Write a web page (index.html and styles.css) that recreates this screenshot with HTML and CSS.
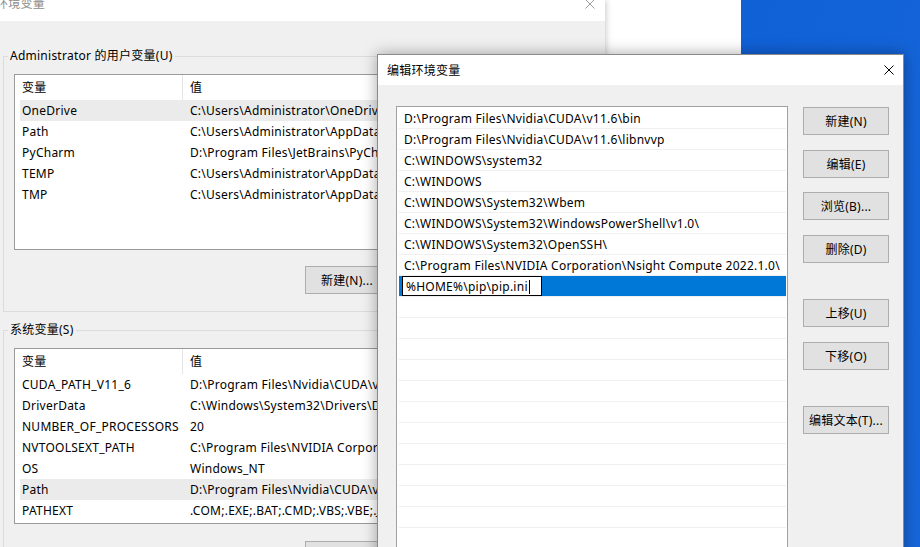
FILE: index.html
```html
<!DOCTYPE html>
<html lang="zh-CN">
<head>
<meta charset="utf-8">
<title>编辑环境变量</title>
<link rel="stylesheet" href="styles.css">
</head>
<body>
  <div class="desk-window"></div>

  <div class="win back">
    <div class="back-title">
      <span class="title">环境变量</span>
      <svg class="close" width="10" height="10" viewBox="0 0 10 10"><path d="M0.5 0.5 L9.5 9.5 M9.5 0.5 L0.5 9.5" stroke="#9a9a9a" stroke-width="1" fill="none"/></svg>
    </div>
    <div class="back-body">
      <fieldset class="group user">
        <legend>Administrator 的用户变量(U)</legend>
        <div class="lv">
          <div class="lv-head"><div class="c1">变量</div><div class="c2">值</div></div>
          <div class="lv-row sel"><div class="c1">OneDrive</div><div class="c2">C:\Users\Administrator\OneDrive</div></div>
          <div class="lv-row"><div class="c1">Path</div><div class="c2">C:\Users\Administrator\AppData\Local\Microsoft\WindowsApps;</div></div>
          <div class="lv-row"><div class="c1">PyCharm</div><div class="c2">D:\Program Files\JetBrains\PyCharm 2021.3\bin;</div></div>
          <div class="lv-row"><div class="c1">TEMP</div><div class="c2">C:\Users\Administrator\AppData\Local\Temp</div></div>
          <div class="lv-row"><div class="c1">TMP</div><div class="c2">C:\Users\Administrator\AppData\Local\Temp</div></div>
        </div>
        <div class="btnrow">
          <button class="btn">新建(N)...</button>
          <button class="btn">编辑(E)...</button>
          <button class="btn">删除(D)</button>
        </div>
      </fieldset>

      <fieldset class="group sys">
        <legend>系统变量(S)</legend>
        <div class="lv">
          <div class="lv-head"><div class="c1">变量</div><div class="c2">值</div></div>
          <div class="lv-row"><div class="c1">CUDA_PATH_V11_6</div><div class="c2">D:\Program Files\Nvidia\CUDA\v11.6</div></div>
          <div class="lv-row"><div class="c1">DriverData</div><div class="c2">C:\Windows\System32\Drivers\DriverData</div></div>
          <div class="lv-row"><div class="c1">NUMBER_OF_PROCESSORS</div><div class="c2">20</div></div>
          <div class="lv-row"><div class="c1">NVTOOLSEXT_PATH</div><div class="c2">C:\Program Files\NVIDIA Corporation\NvToolsExt\</div></div>
          <div class="lv-row"><div class="c1">OS</div><div class="c2">Windows_NT</div></div>
          <div class="lv-row sel"><div class="c1">Path</div><div class="c2">D:\Program Files\Nvidia\CUDA\v11.6\bin;D:\Program Files\Nvidia\CUDA\v11.6\libnvvp;</div></div>
          <div class="lv-row"><div class="c1">PATHEXT</div><div class="c2">.COM;.EXE;.BAT;.CMD;.VBS;.VBE;.JS;.JSE;.WSF;.WSH;.MSC</div></div>
        </div>
        <div class="btnrow">
          <button class="btn">新建(W)...</button>
          <button class="btn">编辑(I)...</button>
          <button class="btn">删除(L)</button>
        </div>
      </fieldset>
    </div>
  </div>

  <div class="win front">
    <div class="front-title">
      <span class="title">编辑环境变量</span>
      <svg class="close" width="10" height="10" viewBox="0 0 10 10"><path d="M0.5 0.5 L9.5 9.5 M9.5 0.5 L0.5 9.5" stroke="#000" stroke-width="1" fill="none"/></svg>
    </div>
    <div class="front-body">
      <div class="pathlist">
        <div class="prow">D:\Program Files\Nvidia\CUDA\v11.6\bin</div>
        <div class="prow">D:\Program Files\Nvidia\CUDA\v11.6\libnvvp</div>
        <div class="prow">C:\WINDOWS\system32</div>
        <div class="prow">C:\WINDOWS</div>
        <div class="prow">C:\WINDOWS\System32\Wbem</div>
        <div class="prow">C:\WINDOWS\System32\WindowsPowerShell\v1.0\</div>
        <div class="prow">C:\WINDOWS\System32\OpenSSH\</div>
        <div class="prow">C:\Program Files\NVIDIA Corporation\Nsight Compute 2022.1.0\</div>
        <div class="prow editing"><div class="editbox"><span>%HOME%\pip\pip.ini</span><span class="caret"></span></div></div>
        <div class="prow"></div>
        <div class="prow"></div>
        <div class="prow"></div>
        <div class="prow"></div>
        <div class="prow"></div>
        <div class="prow"></div>
        <div class="prow"></div>
        <div class="prow"></div>
        <div class="prow"></div>
        <div class="prow"></div>
        <div class="prow"></div>
        <div class="prow"></div>
        <div class="prow"></div>
      </div>
      <div class="btncol">
        <button class="btn">新建(N)</button>
        <button class="btn">编辑(E)</button>
        <button class="btn">浏览(B)...</button>
        <button class="btn">删除(D)</button>
        <button class="btn spaced">上移(U)</button>
        <button class="btn">下移(O)</button>
        <button class="btn spaced">编辑文本(T)...</button>
      </div>
    </div>
  </div>
</body>
</html>
```
FILE: styles.css
```css
* { box-sizing: border-box; }
html, body { margin: 0; padding: 0; }
body {
  width: 920px;
  height: 547px;
  overflow: hidden;
  position: relative;
  background: linear-gradient(100deg, #0a56cc 0%, #0d5dd4 60%, #1666da 100%);
  font-family: "Noto Sans", "Noto Sans CJK SC", sans-serif;
  font-size: 12px;
  letter-spacing: 0.25px;
  color: #000;
}

.desk-window {
  position: absolute;
  left: 420px;
  top: 0;
  width: 321px;
  height: 547px;
  background: #fff;
}

.win { position: absolute; }

/* back window */
.back {
  left: 0;
  top: 0;
  width: 605px;
  height: 547px;
  background: #f0f0f0;
  box-shadow: 1px 0 6px rgba(0, 0, 0, 0.22);
}
.back-title {
  height: 21px;
  background: #fff;
  display: flex;
  justify-content: space-between;
  align-items: flex-start;
  padding-right: 10px;
}
.back-title .title {
  color: #8c8c8c;
  margin-left: -4px;
  margin-top: -3px;
  line-height: 14px;
}
.back-title .close { margin-top: -1px; }

.back-body { padding: 27px 11px 0 3px; }

fieldset.group {
  margin: 0;
  padding: 10px 10px 17px 10px;
  border: 1px solid #dcdcdc;
  min-width: 0;
}
fieldset.group legend {
  padding: 0 2px;
  margin-left: -6px;
  line-height: 16px;
}
fieldset.sys { margin-top: 10px; }

.lv {
  height: 176px;
  background: #fff;
  border: 1px solid #9a9a9a;
  padding-left: 5px;
  overflow: hidden;
}
.lv-head { height: 25px; display: flex; }
.lv-head .c1 {
  width: 163px;
  flex: none;
  border-right: 1px solid #e5e5e5;
  padding-left: 2px;
  line-height: 25px;
}
.lv-head .c2 { padding-left: 7px; line-height: 25px; }
.lv-row {
  height: 21px;
  line-height: 21px;
  display: flex;
  white-space: nowrap;
}
.lv-row.sel { background: #ebebeb; }
.lv-row .c1 { width: 168px; flex: none; padding-left: 2px; }
.lv-row .c2 { padding-left: 2px; }

.btnrow {
  display: flex;
  justify-content: flex-end;
  gap: 13px;
  margin-top: 16px;
}
.sys .btnrow { margin-top: 17px; }

.btn {
  height: 28px;
  background: #e1e1e1;
  border: 1px solid #adadad;
  font-family: inherit;
  font-size: 12px;
  letter-spacing: 0.25px;
  color: #000;
  padding: 0;
  margin: 0;
}
.btnrow .btn { width: 84px; }

/* front dialog */
.front {
  left: 377px;
  top: 54px;
  width: 527px;
  height: 520px;
  background: #f0f0f0;
  border: 1px solid #8a8a8a;
  box-shadow: 0 0 14px rgba(0, 0, 0, 0.35);
}
.front-title {
  height: 30px;
  background: #fff;
  display: flex;
  align-items: center;
  justify-content: space-between;
  padding: 0 9px;
}
.front-body {
  display: flex;
  align-items: flex-start;
  gap: 15px;
  padding: 21px 14px 0 18px;
}
.pathlist {
  width: 392px;
  height: 470px;
  flex: none;
  background: #fff;
  border: 1px solid #a0a0a0;
  padding: 1px 1px 0 2px;
  overflow: hidden;
}
.prow {
  height: 21px;
  border-bottom: 1px solid #f0f0f0;
  padding: 1px 0 0 5px;
  line-height: 20px;
  white-space: nowrap;
}
.prow.editing {
  background: #0078d7;
  padding: 0 0 0 3px;
}
.editbox {
  width: 140px;
  height: 20px;
  background: #fff;
  border: 1px solid #000;
  padding: 1px 0 0 3px;
  display: flex;
  align-items: center;
  line-height: 18px;
}
.caret {
  display: inline-block;
  width: 0;
  height: 14px;
  border-left: 1px solid #000;
  margin-left: 1px;
}
.btncol {
  width: 86px;
  flex: none;
  display: flex;
  flex-direction: column;
  gap: 14.67px;
  margin-top: 1px;
}
.btncol .btn { width: 86px; }
.btncol .spaced { margin-top: 21.33px; }
```
